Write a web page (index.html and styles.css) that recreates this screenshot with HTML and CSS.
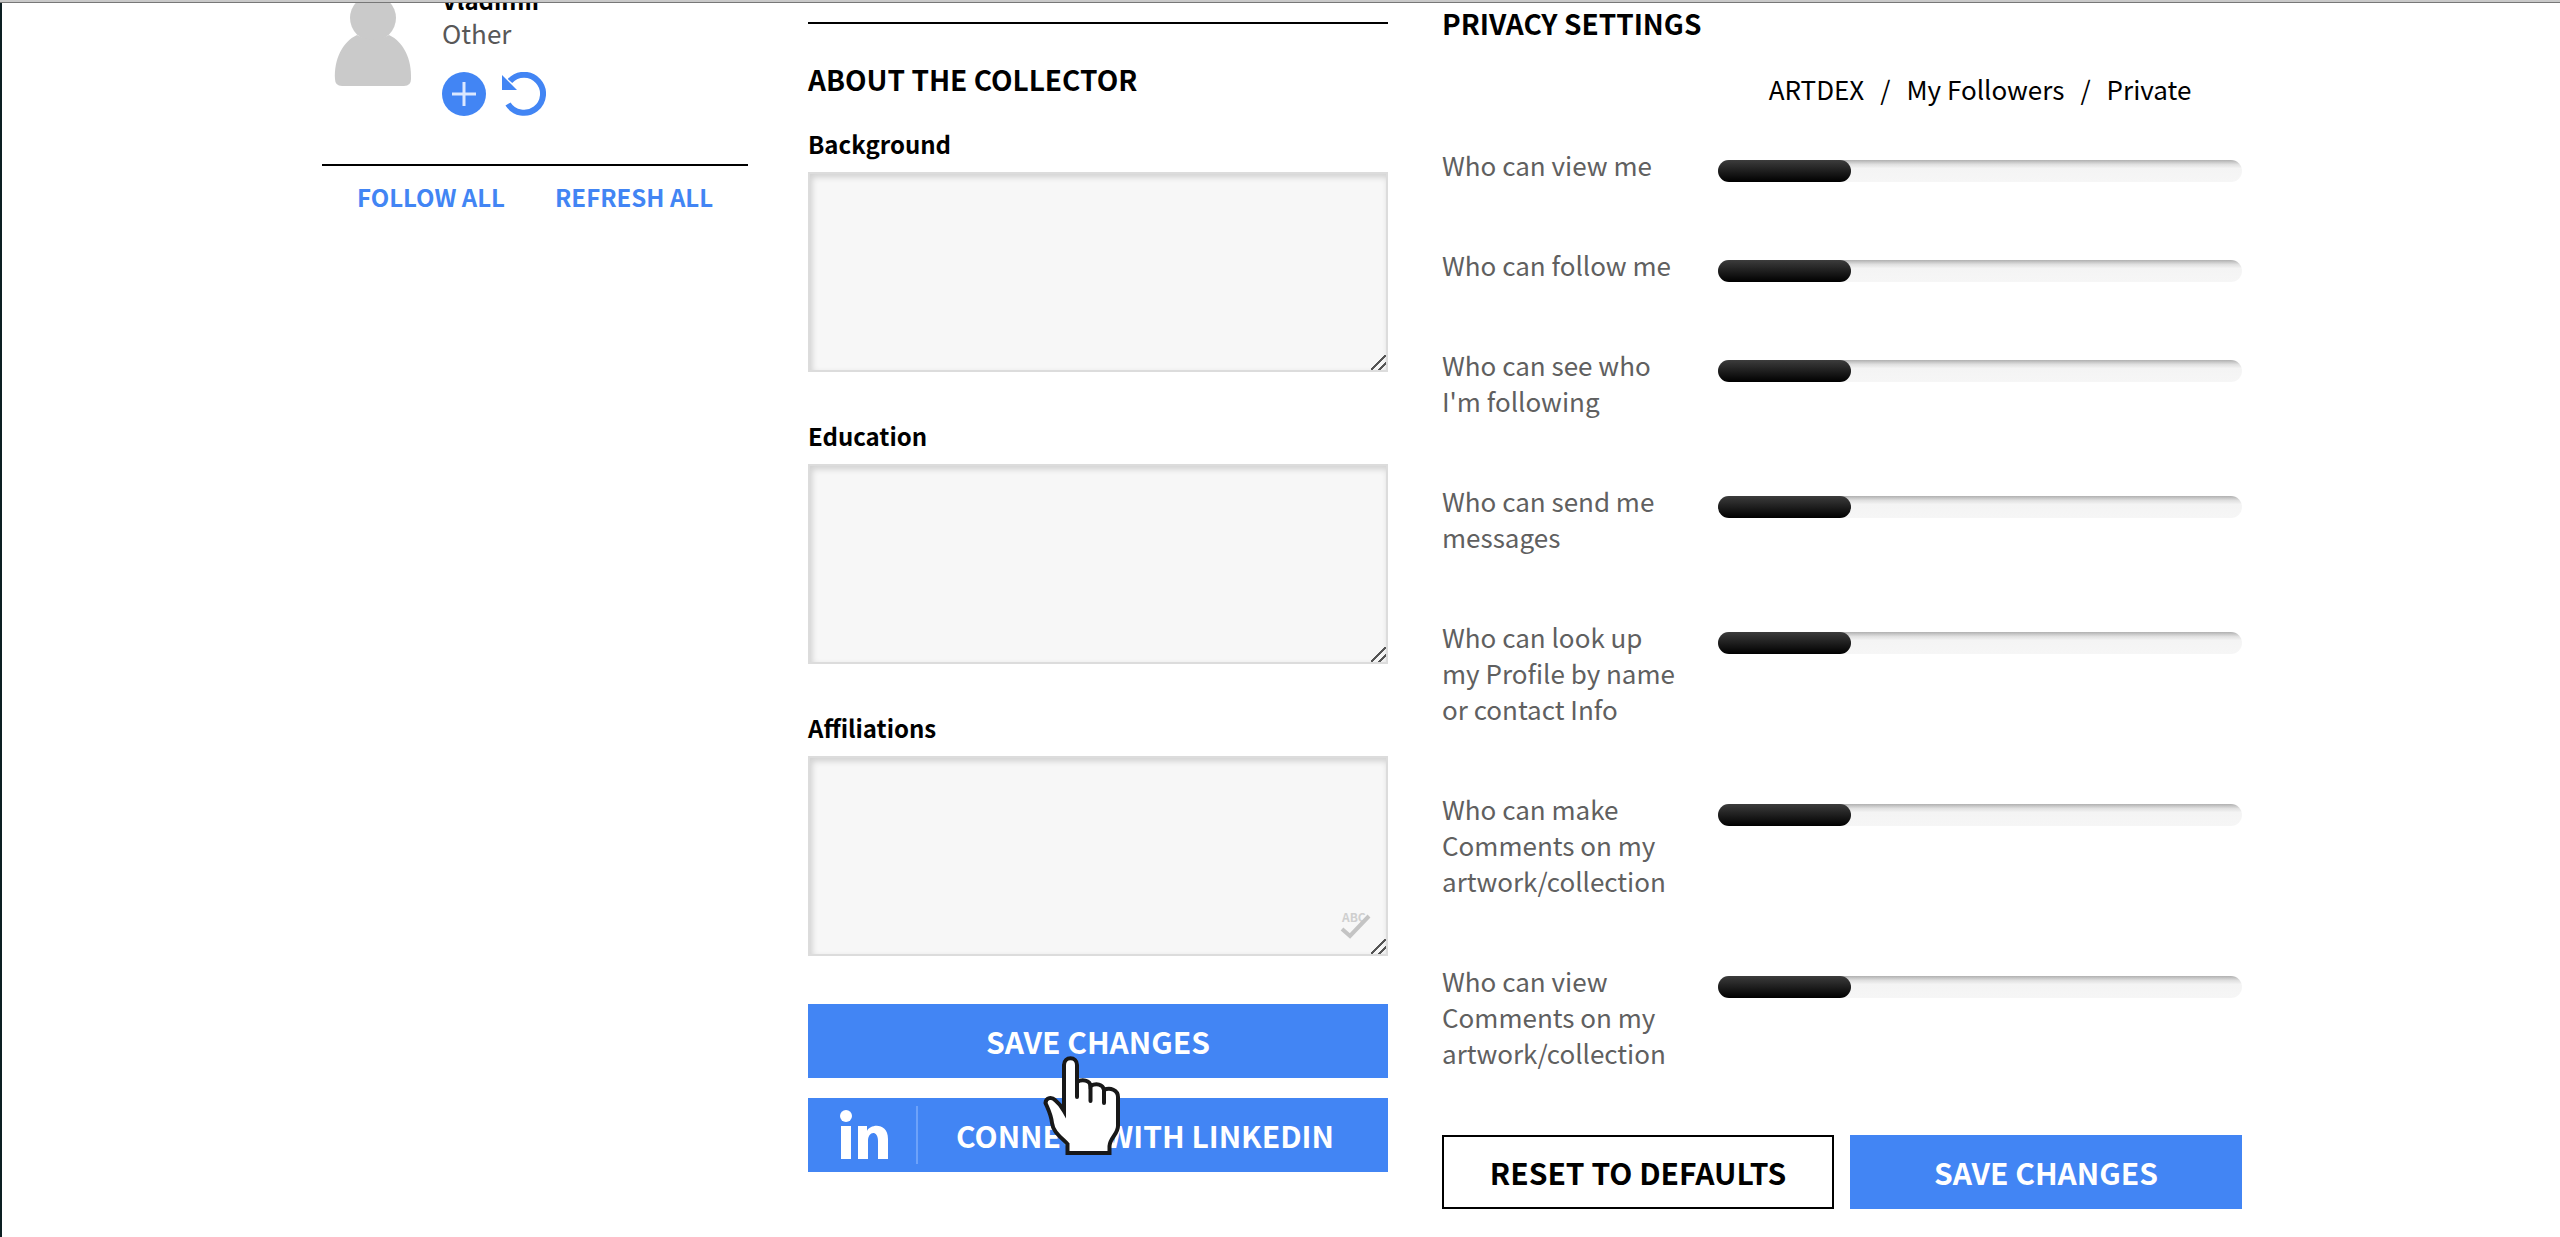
FILE: index.html
```html
<!DOCTYPE html>
<html lang="en">
<head>
<meta charset="utf-8">
<title>ARTDEX – Collector profile</title>
<link rel="stylesheet" href="styles.css">
</head>
<body>
<main class="page">
  <aside class="suggestions">
    <div class="person">
      <svg class="avatar" viewBox="0 0 78 94" aria-hidden="true"><circle cx="39" cy="26" r="23"/><path d="M23 43Q39 52 55 43C70 50 78 68 77 87Q77 94 70 94H8Q1 94 1 87C0 68 8 50 23 43Z"/></svg>
      <div class="person-info">
        <strong class="person-name">Vladimir</strong>
        <span class="person-role">Other</span>
        <div class="person-actions">
          <button class="icon-button" type="button" aria-label="Follow">
            <svg viewBox="0 0 44 44"><circle cx="22" cy="22" r="22" fill="#4285f4"/><path d="M22 10V34M10 22H34" stroke="#dbe8ff" stroke-width="3"/></svg>
          </button>
          <button class="icon-button" type="button" aria-label="Refresh">
            <svg viewBox="0 0 44 44"><path d="M8 9A19 19 0 1 1 6 32" fill="none" stroke="#4285f4" stroke-width="6"/><path d="M0 3V18H15Z" fill="#4285f4"/></svg>
          </button>
        </div>
      </div>
    </div>
    <nav class="bulk-links"><a href="#follow">FOLLOW ALL</a><a href="#refresh">REFRESH ALL</a></nav>
  </aside>

  <form class="about">
    <h2 class="title about-title">ABOUT THE COLLECTOR</h2>
    <div class="field"><label for="background">Background</label><textarea id="background"></textarea></div>
    <div class="field"><label for="education">Education</label><textarea id="education"></textarea></div>
    <div class="field">
      <label for="affiliations">Affiliations</label><textarea id="affiliations"></textarea>
      <svg class="spellcheck" viewBox="0 0 32 30" aria-hidden="true"><text x="2" y="12">ABC</text><path d="M2 19L10 26L29 6" fill="none" stroke="#c4c4c4" stroke-width="4"/></svg>
    </div>
    <div class="about-actions">
      <button class="button" type="submit">SAVE CHANGES</button>
      <button class="button linkedin" type="button">
        <span class="linkedin-mark"><svg viewBox="0 0 49 50" aria-hidden="true"><circle cx="6" cy="6" r="6"/><path d="M1 16H11V49H1ZM18 16H27V21C30 14 48 12 48 29V49H38V31C38 20 28 21 28 31V49H18Z"/></svg></span>
        <span class="linkedin-text">CONNECT WITH LINKEDIN</span>
      </button>
      <svg class="pointer" viewBox="0 0 78 100" aria-hidden="true"><path d="M21 55V9C21 0 34 0 34 9V26C39 23 47 24 47.500 30C53 27 60 28 61 34C67 31 75 34 75 41V70C75 78 67 82 66.500 90V97H24.500V88C18 81 10 76 9 67C8 58 5 53 2.500 47C3 41 9 41 12 44Q17 48 21 55Z"/><path d="M34 24V41M47.500 29V45M61 33V47"/></svg>
    </div>
  </form>

  <form class="privacy">
    <h2 class="title">PRIVACY SETTINGS</h2>
    <p class="legend"><span>ARTDEX</span><span>/</span><span>My Followers</span><span>/</span><span>Private</span></p>
    <div class="setting"><label for="p1">Who can view me</label><input id="p1" type="range" min="0" max="2" value="0"></div>
    <div class="setting"><label for="p2">Who can follow me</label><input id="p2" type="range" min="0" max="2" value="0"></div>
    <div class="setting"><label for="p3">Who can see who<br>I'm following</label><input id="p3" type="range" min="0" max="2" value="0"></div>
    <div class="setting"><label for="p4">Who can send me<br>messages</label><input id="p4" type="range" min="0" max="2" value="0"></div>
    <div class="setting"><label for="p5">Who can look up<br>my Profile by name<br>or contact Info</label><input id="p5" type="range" min="0" max="2" value="0"></div>
    <div class="setting"><label for="p6">Who can make<br>Comments on my<br>artwork/collection</label><input id="p6" type="range" min="0" max="2" value="0"></div>
    <div class="setting"><label for="p7">Who can view<br>Comments on my<br>artwork/collection</label><input id="p7" type="range" min="0" max="2" value="0"></div>
    <div class="privacy-actions">
      <button class="button outline" type="reset">RESET TO DEFAULTS</button>
      <button class="button" type="submit">SAVE CHANGES</button>
    </div>
  </form>
</main>
</body>
</html>
```
FILE: styles.css
```css
* { box-sizing: border-box; }

body {
  margin: 0;
  min-height: 100vh;
  overflow: hidden;
  padding-left: 2px;
  border-left: 2px solid #0c1f22;
  background: #fff;
  color: #000;
  font: 26px/36px "Noto Sans CJK JP", "Noto Sans", sans-serif;
}

body::before {
  content: "";
  position: absolute;
  inset: 0 0 auto 0;
  height: 2px;
  background: #c9c9c9;
  border-bottom: 1px solid #777;
}

.page {
  display: grid;
  grid-template-columns: 432fr 580fr 800fr;
  column-gap: 54px;
  width: calc(75% + 3px);
  min-width: 1400px;
  margin: 0 auto;
}

.title { margin: 0; font-size: 28px; line-height: 34px; font-weight: 700; }

/* Suggested people */
.suggestions { padding-right: 6px; }
.person {
  display: flex;
  gap: 30px;
  margin-top: -16px;
  padding: 0 12px 48px;
  border-bottom: 2px solid #000;
}
.avatar { width: 78px; height: 94px; margin-top: 8px; fill: #cacaca; }
.person-info { display: flex; flex-direction: column; }
.person-name { font-size: 24px; line-height: 32px; }
.person-role { line-height: 34px; color: #585858; }
.person-actions { display: flex; gap: 16px; margin-top: 22px; }
.icon-button { width: 44px; height: 44px; padding: 0; border: 0; background: none; }
.icon-button svg { display: block; width: 44px; height: 44px; }
.bulk-links { display: flex; justify-content: center; gap: 50px; padding-top: 13px; }
.bulk-links a { color: #4285f4; font-size: 24px; font-weight: 700; text-decoration: none; }

/* Collector form */
.about { margin-top: 22px; border-top: 2px solid #000; }
.about-title { margin: 38px 0 30px; }
.field { position: relative; margin-bottom: 46px; }
.field label { display: block; padding-bottom: 10px; font-size: 24px; font-weight: 700; }
.field textarea {
  display: block;
  width: 100%;
  height: 200px;
  border: 2px solid #dcdcdc;
  background: #f7f7f7;
  box-shadow: inset 2px 3px 6px rgba(0, 0, 0, .16);
  resize: both;
}
.field textarea::-webkit-resizer {
  background: linear-gradient(135deg, transparent 45%, #555 46% 54%, transparent 55% 72%, #555 73% 81%, transparent 82%);
}
.spellcheck { position: absolute; right: 16px; bottom: 16px; width: 32px; height: 30px; }
.spellcheck text { font-size: 12px; font-weight: 700; fill: #cfcfcf; }

.button {
  width: 100%;
  height: 74px;
  border: 0;
  padding: 0;
  background: #4285f4;
  color: #fff;
  font: inherit;
  font-size: 30px;
  font-weight: 700;
}
.about-actions { position: relative; display: grid; gap: 20px; margin-top: 48px; }
.linkedin { display: flex; align-items: center; }
.linkedin-mark { width: 110px; padding: 4px 0 4px 32px; border-right: 2px solid #6da2fa; }
.linkedin-mark svg { display: block; width: 49px; height: 50px; fill: #fff; }
.linkedin-text { flex: 1; padding-right: 16px; }
.pointer {
  position: absolute;
  top: 52px;
  left: 235px;
  width: 78px;
  height: 100px;
  fill: #fff;
  stroke: #181818;
  stroke-width: 4;
  stroke-linecap: round;
}

/* Privacy form */
.privacy { padding-top: 6px; }
.legend { display: flex; justify-content: center; gap: 16px; margin: 31px 0 40px 276px; }
.setting { display: flex; align-items: flex-start; padding-bottom: 64px; }
.setting:first-of-type { margin-top: 1px; }
.setting label { flex: 0 0 276px; color: #606060; }
.setting input {
  appearance: none;
  flex: 1;
  min-width: 0;
  height: 22px;
  margin: 13px 0 0;
  border-radius: 11px;
  background: linear-gradient(#b0b0b0, #e0e0e0 20%, #f4f4f4 38%, #f6f6f6);
}
.setting input::-webkit-slider-thumb {
  appearance: none;
  width: 133px;
  height: 22px;
  border-radius: 11px;
  background: linear-gradient(#3c3c3c, #000);
}
.privacy-actions { display: grid; grid-template-columns: 1fr 1fr; gap: 16px; }
.outline { border: 2px solid #000; background: #fff; color: #000; }
```
